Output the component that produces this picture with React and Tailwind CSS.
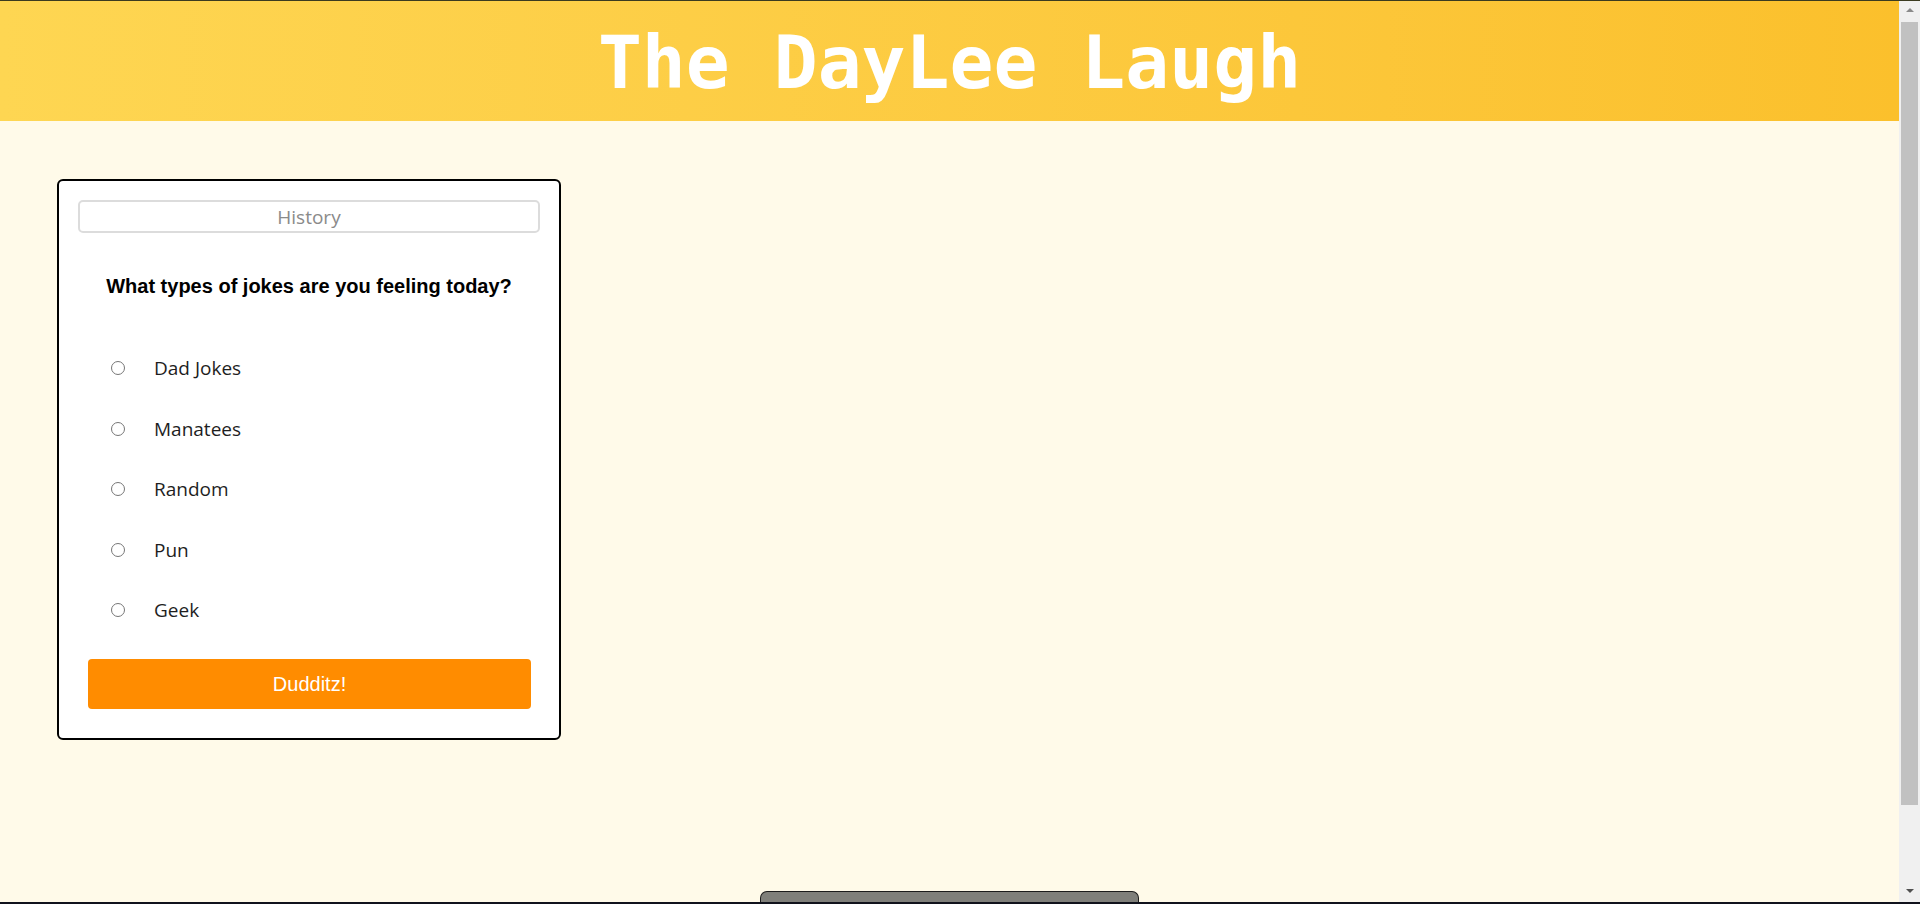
import { useState } from "react";

const jokeTypes = ["Dad Jokes", "Manatees", "Random", "Pun", "Geek"];

export default function App() {
  const [choice, setChoice] = useState(null);

  return (
    <div className="h-[904px] flex flex-col overflow-hidden border-t border-[#3b3b1f] border-b-2 border-b-[#10121c]">
      <div className="flex flex-1 min-h-0">
        {/* Page */}
        <main className="relative flex-1 bg-[#fffae9]">
          <header className="h-[120px] flex items-center justify-center bg-linear-to-r from-[#fed652] to-[#fbc02c]">
            <h1
              className="text-white text-[73px] font-bold leading-none pt-[2px]"
              style={{ fontFamily: '"DejaVu Sans Mono", "Liberation Mono", monospace' }}
            >
              The DayLee Laugh
            </h1>
          </header>

          <section className="ml-[57px] mt-[58px] w-[504px] bg-white border-2 border-black rounded-[6px] px-[19px] pt-[19px] pb-[29px]">
            <button
              className="w-full h-[33px] border-2 border-[#dcdcdc] rounded-[5px] bg-white text-[19px] leading-none text-[#8a8a8a] pt-[1px]"
              style={{ fontFamily: '"Open Sans", "Noto Sans", sans-serif' }}
            >
              History
            </button>

            <h2
              className="mt-[42px] text-center text-[20px] leading-[23px] font-bold text-black"
              style={{ fontFamily: '"Liberation Sans", Arial, sans-serif' }}
            >
              What types of jokes are you feeling today?
            </h2>

            <div className="mt-[40px]">
              {jokeTypes.map((type) => (
                <label
                  key={type}
                  className="h-[60.5px] flex items-center pl-[33px] cursor-pointer"
                >
                  <input
                    type="radio"
                    name="jokeType"
                    value={type}
                    checked={choice === type}
                    onChange={() => setChoice(type)}
                    className="m-0 w-[14px] h-[14px]"
                  />
                  <span
                    className="ml-[29px] text-[19px] text-[#1e1e1e]"
                    style={{ fontFamily: '"Open Sans", "Noto Sans", sans-serif' }}
                  >
                    {type}
                  </span>
                </label>
              ))}
            </div>

            <button
              className="mt-[18px] ml-[10px] w-[443px] h-[50px] rounded-[4px] bg-[#ff8c00] text-white text-[20px]"
              style={{ fontFamily: '"Liberation Sans", Arial, sans-serif' }}
            >
              Dudditz!
            </button>
          </section>

          {/* bottom tab peeking in */}
          <div className="absolute bottom-0 left-[760px] w-[379px] h-[11px] bg-[#7f7f7a] border border-b-0 border-[#1c1c1c] rounded-t-[7px]"></div>
        </main>

        {/* Scrollbar */}
        <div className="w-[21px] bg-[#f0f0f0] flex flex-col items-center">
          <div className="h-[21px] flex items-center justify-center pb-[4px]">
            <div className="w-0 h-0 border-x-[4px] border-x-transparent border-b-[4px] border-b-[#8a8a8a]"></div>
          </div>
          <div className="w-[17px] h-[783px] bg-[#c1c1c1]"></div>
          <div className="flex-1"></div>
          <div className="h-[20px] flex items-center justify-center pb-[2px]">
            <div className="w-0 h-0 border-x-[4px] border-x-transparent border-t-[4px] border-t-[#505050]"></div>
          </div>
        </div>
      </div>
    </div>
  );
}
